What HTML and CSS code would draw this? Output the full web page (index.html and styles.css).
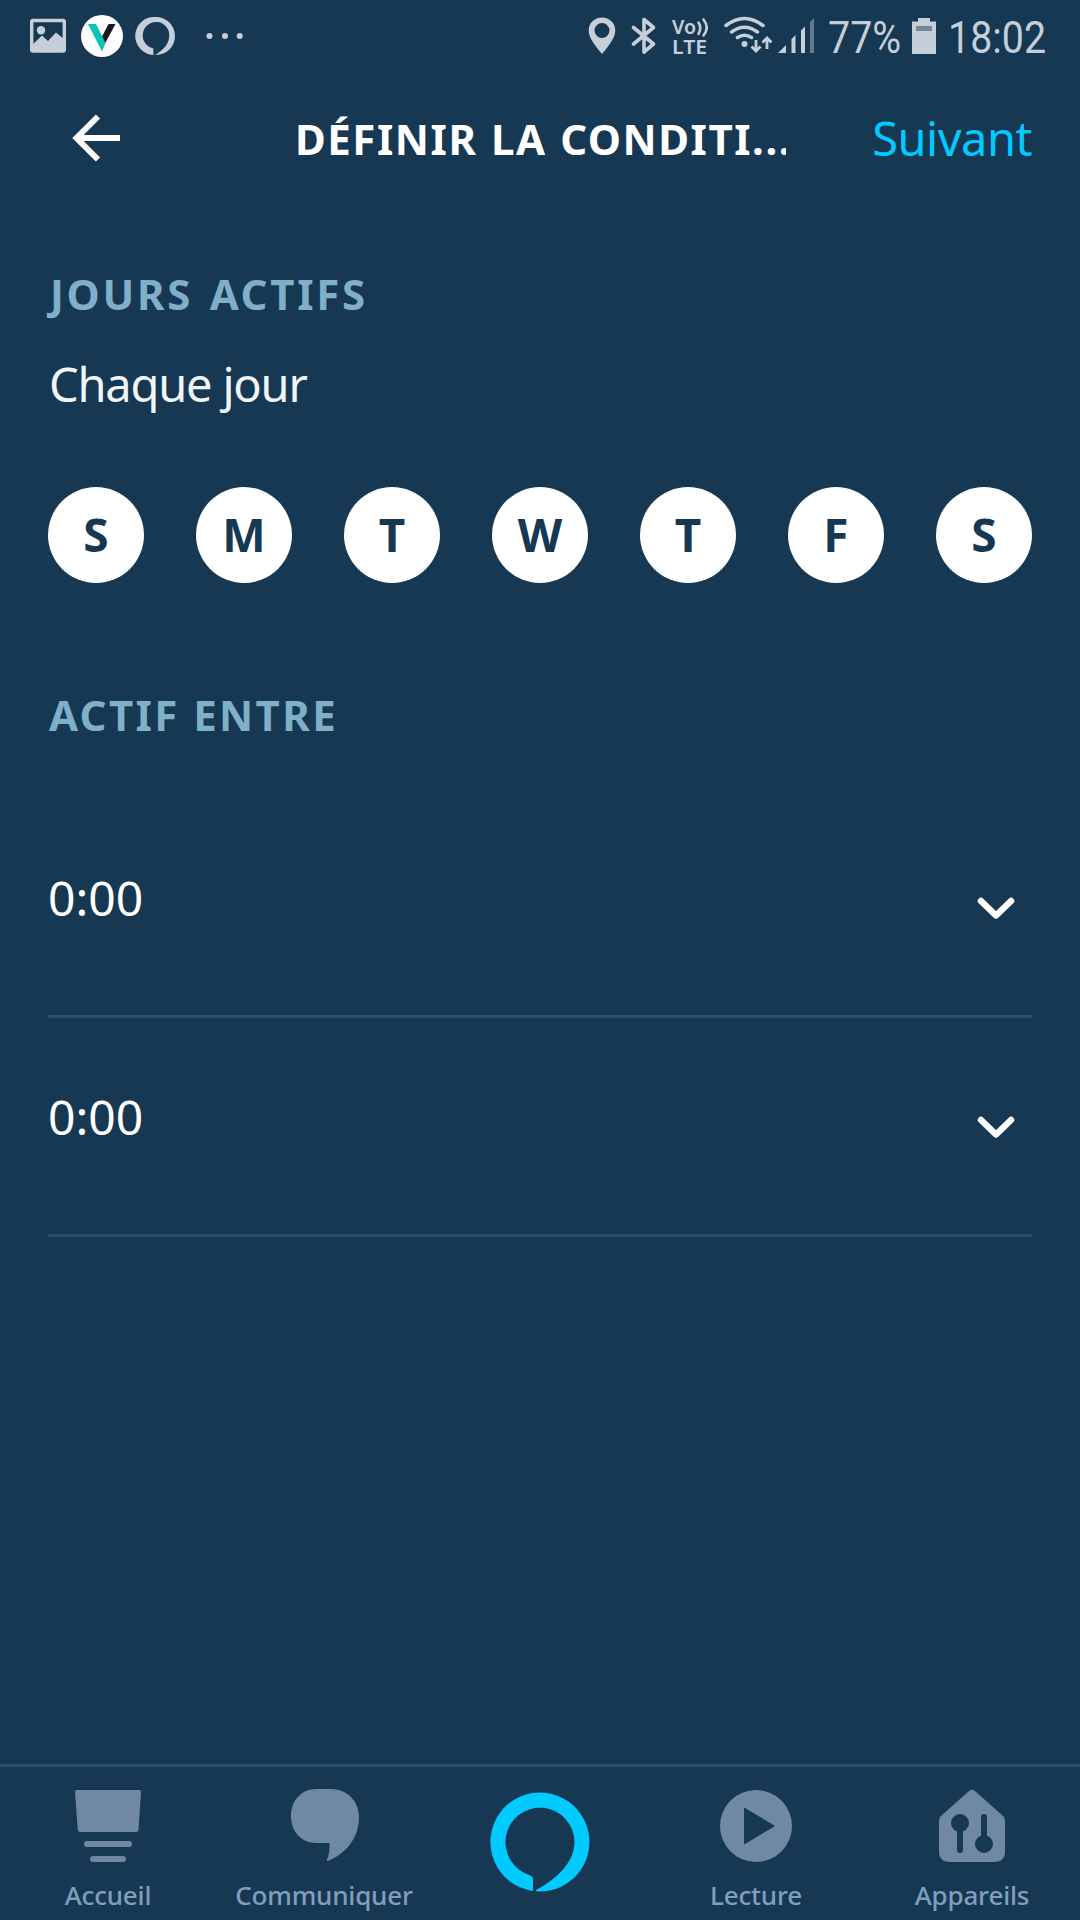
FILE: index.html
```html
<!DOCTYPE html>
<html lang="fr">
<head>
<meta charset="utf-8">
<title>Définir la condition</title>
<link rel="stylesheet" href="styles.css">
</head>
<body>
<div class="screen">
  <div class="status">
    <svg class="status-left" width="250" height="72" viewBox="0 0 250 72" fill="#c5ced9">
      <rect x="31.7" y="20.5" width="32.6" height="30.5" rx="1.5" fill="none" stroke="#c5ced9" stroke-width="3.4"/>
      <circle cx="41" cy="30.3" r="4.2"/>
      <path d="M32 50v-5l10-9.5 6 5.500 8-8.500 8.500 7v10.500z"/>
      <circle cx="102" cy="36" r="21" fill="#fff"/>
      <path d="M108.500 24h7L105 43.500l-3.500-6z" fill="#1b1b1f"/>
      <path d="M88 24h8l9.500 19-3.500 8.500z" fill="#0cc4b4"/>
      <path fill-rule="evenodd" d="M156 17a19 19 0 0 1 0 38q-1.500 0-2.600-.2v-5.300q0-1-1-1.400A13.300 13.300 0 1 1 169.300 36q0 10-13.300 18.500l-1 .4A19 19 0 1 1 156 17z"/>
      <circle cx="209.500" cy="36" r="3"/><circle cx="225" cy="36" r="3"/><circle cx="239.700" cy="36" r="3"/>
    </svg>
    <div class="status-right">
      <svg width="240" height="72" viewBox="580 0 240 72" fill="#c5ced9">
        <path fill-rule="evenodd" d="M602 17.500c7.500 0 13.300 5.500 13.300 13 0 8-8 17-13.300 23.500-5.300-6.500-13.300-15.500-13.300-23.500 0-7.500 5.800-13 13.300-13zm0 5.500a7.500 7.500 0 1 0 0 15 7.500 7.500 0 0 0 0-15z"/>
        <path d="M633.500 27.500l20 16.500-9.500 8V19.500l9.500 8-20 16.500" fill="none" stroke="#c5ced9" stroke-width="3.600" stroke-linejoin="round" stroke-linecap="round"/>
        <text class="volte" x="672" y="34" textLength="24" lengthAdjust="spacingAndGlyphs">Vo</text>
        <text class="volte" x="672" y="54" textLength="35" lengthAdjust="spacingAndGlyphs">LTE</text>
        <g fill="none" stroke="#c5ced9" stroke-width="2.600" stroke-linecap="round"><path d="M698.500 22.500q3.500 5.500 0 11.500M703.500 19.500q6.500 8 0 16"/></g>
        <g fill="none" stroke="#c5ced9" stroke-width="3.500" stroke-linecap="round"><path d="M726 25.500q18.500-14 37 0M731.500 32q13-9.500 26 0M737.500 37.500q7-4.500 14 0"/></g>
        <circle cx="744.500" cy="44" r="3"/>
        <path d="M756 40v10M751.500 46.500l4.500 4.500 4.500-4.500M767 49V38.500M762.500 42.500l4.500-4.500 4.500 4.500" fill="none" stroke="#c5ced9" stroke-width="2.800"/>
        <path d="M778 53l8-8v8zM791.500 39l4-4v18h-4zM801 30.500l4-4V53h-4z"/>
        <path d="M810 22l4-4v35h-4z" fill="#617990"/>
      </svg>
      <span class="status-text battery-level"><span>77%</span></span>
      <svg class="battery" width="24" height="72" viewBox="0 0 24 72"><path d="M6 18h12v3.500h6V54H0V21.500h6z" fill="#c5ced9"/><path d="M4 26h16v5H4z" fill="#74879a"/></svg>
      <span class="status-text clock"><span>18:02</span></span>
    </div>
  </div>

  <header class="header">
    <svg class="back" width="48" height="48" viewBox="0 0 48 48" fill="none" stroke="#fff" stroke-width="6"><path d="M48 24H5M26 2.500L4.500 24 26 45.500"/></svg>
    <h1 class="title">DÉFINIR LA CONDITI...</h1>
    <a class="next">Suivant</a>
  </header>

  <main class="content">
    <h2 class="section days-title">JOURS ACTIFS</h2>
    <p class="summary">Chaque jour</p>
    <div class="days">
      <span class="day">S</span>
      <span class="day">M</span>
      <span class="day">T</span>
      <span class="day">W</span>
      <span class="day">T</span>
      <span class="day">F</span>
      <span class="day">S</span>
    </div>
    <h2 class="section hours-title">ACTIF ENTRE</h2>
    <div class="time-row">
      <span class="time">0:00</span>
      <svg class="chevron" width="38" height="22" viewBox="0 0 38 22"><path d="M4 4l15 14.500L34 4" fill="none" stroke="#fff" stroke-width="6.500" stroke-linecap="round" stroke-linejoin="round"/></svg>
    </div>
    <div class="time-row">
      <span class="time">0:00</span>
      <svg class="chevron" width="38" height="22" viewBox="0 0 38 22"><path d="M4 4l15 14.500L34 4" fill="none" stroke="#fff" stroke-width="6.500" stroke-linecap="round" stroke-linejoin="round"/></svg>
    </div>
  </main>

  <nav class="tabs">
    <div class="tab">
      <svg width="72" height="76" viewBox="0 0 72 76"><path d="M5 2h62q2 0 2 2l-2.500 38q-.200 2-2 2H8q-2 0-2.200-2L3 4q0-2 2-2z"/><rect x="12" y="53" width="48" height="6" rx="3"/><rect x="18" y="68" width="36" height="6" rx="3"/></svg>
      <span>Accueil</span>
    </div>
    <div class="tab">
      <svg width="72" height="76" viewBox="0 0 72 76"><path d="M28 1h15C59 1 71 13 71 29c0 20-12 36-30 43.500q-3 1-2-1c2-4 2.600-9 2.400-16.500H28C13 55 3 43 3 28 3 13 13 1 28 1z"/></svg>
      <span>Communiquer</span>
    </div>
    <div class="tab tab-alexa">
      <svg width="100" height="100" viewBox="0 0 100 100"><path d="M43 99V87q0-2.500-3-3.800A34.500 34.500 0 1 1 84.500 50C84.500 70 68 86 45.500 98.500L47 99.400A49.500 49.500 0 1 0 43 99z"/></svg>
    </div>
    <div class="tab">
      <svg width="72" height="76" viewBox="0 0 72 76"><path fill-rule="evenodd" d="M36 2a36 36 0 1 1 0 72 36 36 0 0 1 0-72zM25 20q-1-.6-1 .5v35q0 1 1 .5l29-17.300q1-.7 0-1.400z"/></svg>
      <span>Lecture</span>
    </div>
    <div class="tab">
      <svg width="72" height="76" viewBox="0 0 72 76"><path d="M33 3q3-2.500 6 0l28 25q2 2 2 5v30q0 11-11 11H14Q3 74 3 63V33q0-3 2-5z"/><g class="knobs"><circle cx="24" cy="35" r="9"/><circle cx="48" cy="56" r="9"/><path d="M24 35v27M48 56V29"/></g></svg>
      <span>Appareils</span>
    </div>
  </nav>
</div>
</body>
</html>
```
FILE: styles.css
```css
* { box-sizing: border-box; margin: 0; padding: 0; }

body { background: #173852; }

.screen {
  width: 1080px;
  height: 1920px;
  display: flex;
  flex-direction: column;
  overflow: hidden;
  background: #173852;
  color: #fff;
  font-family: "Noto Sans", "Open Sans", sans-serif;
}

svg { display: block; flex: none; }

/* Status bar */
.status {
  height: 72px;
  display: flex;
  justify-content: space-between;
}
.status-right { display: flex; padding-right: 32px; }
.status-text {
  font: 45px/75px Roboto, sans-serif;
  color: #c5ced9;
  white-space: nowrap;
}
.status-text span { display: inline-block; transform-origin: 0 50%; transform: scaleX(.875); }
.battery-level { width: 83px; padding-left: 8px; }
.battery { margin-left: 9px; }
.clock { width: 112px; padding-left: 12px; }
.volte { font: 600 20px "Noto Sans", sans-serif; }

/* Header */
.header {
  height: 132px;
  display: flex;
  align-items: center;
  padding: 0 48px 0 72px;
}
.title {
  width: 491px;
  margin-left: 175px;
  overflow: hidden;
  white-space: nowrap;
  font-size: 42px;
  line-height: 130px;
  padding-top: 1px;
  font-weight: 700;
  letter-spacing: 1.550px;
  word-spacing: 1px;
}
.next {
  margin-left: auto;
  font-size: 47px;
  line-height: 130px;
  letter-spacing: -.500px;
  font-weight: 450;
  color: #00caff;
}

/* Content */
.content { flex: 1; padding: 60px 48px 0; }
.section {
  font-size: 42px;
  line-height: 60px;
  font-weight: 700;
  letter-spacing: 2.400px;
  color: #7fafc9;
}
.days-title { padding-left: 2px; letter-spacing: 2.700px; word-spacing: 3px; }
.summary {
  margin-top: 30px;
  font-size: 47px;
  line-height: 60px;
  letter-spacing: -1.200px;
  font-weight: 450;
  padding-left: 1px;
  color: #f2f5f8;
}
.days {
  display: flex;
  justify-content: space-between;
  margin-top: 73px;
}
.day {
  width: 96px;
  height: 96px;
  border-radius: 50%;
  background: #fff;
  color: #173852;
  text-align: center;
  font-size: 46px;
  line-height: 94px;
  font-weight: 700;
}
.hours-title { margin: 102px 0 54px; padding-left: 1px; }
.time-row {
  height: 219px;
  display: flex;
  justify-content: space-between;
  align-items: center;
  border-bottom: 3px solid #2d4d69;
  padding-right: 17px;
}
.time { font-size: 48px; line-height: 60px; padding-bottom: 19px; font-weight: 450; }
.chevron { margin-top: 1px; }

/* Bottom tabs */
.tabs {
  height: 156px;
  display: grid;
  grid-template-columns: repeat(5, 216px);
  border-top: 3px solid #2d4d69;
}
.tab {
  display: flex;
  flex-direction: column;
  align-items: center;
  padding-top: 21px;
  font-size: 26px;
  line-height: 36px;
  font-weight: 500;
  letter-spacing: -.200px;
  color: #7f9fbd;
}
.tab svg { fill: #6e89a1; margin-bottom: 13px; }
.tab-alexa svg { fill: #00caff; margin-top: 4px; }
.knobs { fill: #173852; stroke: none; }
.knobs path { stroke: #173852; stroke-width: 6px; stroke-linecap: round; }
```
